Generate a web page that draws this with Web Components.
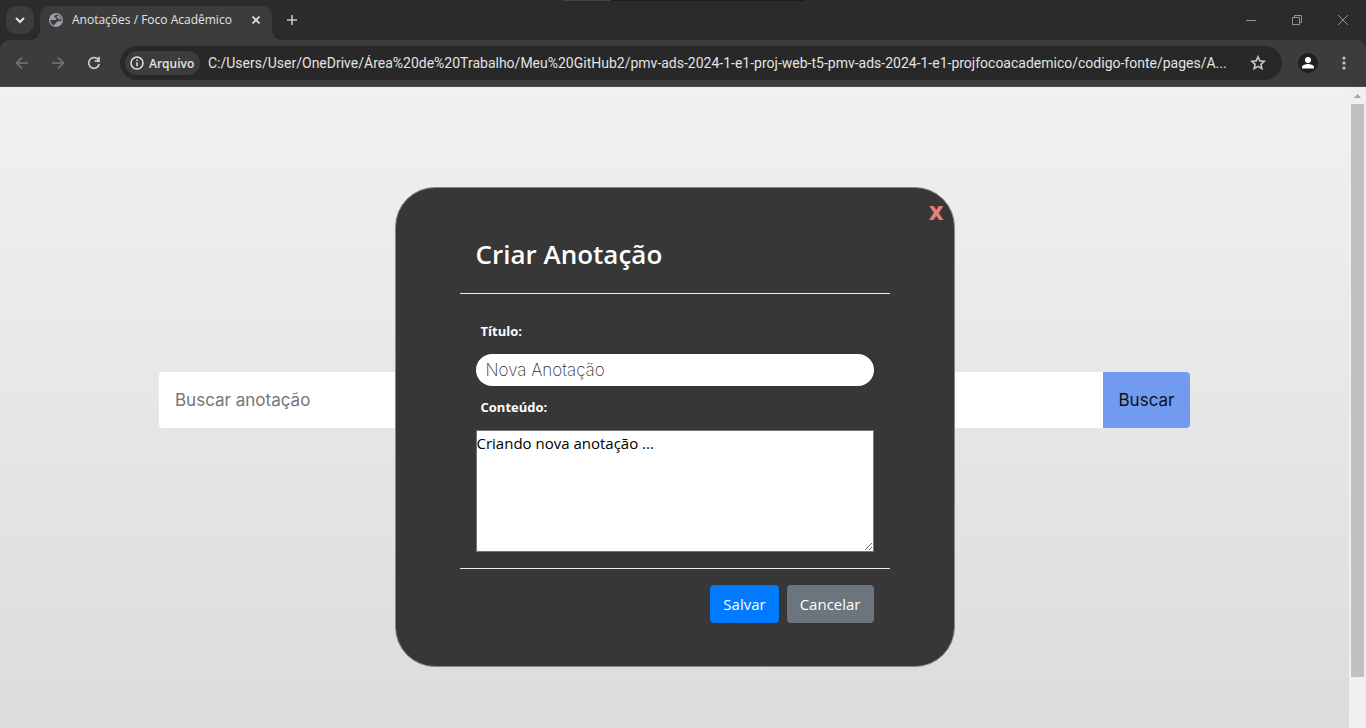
<!DOCTYPE html>
<html lang="pt-BR">
<head>
<meta charset="utf-8">
<title>Anotações / Foco Acadêmico</title>
<style>
html, body { height: 100%; margin: 0; }
body {
  --ui: "Open Sans", "Noto Sans", sans-serif;
  --geo: Inter, "Open Sans", sans-serif;
  --chrome: Roboto, "Open Sans", sans-serif;
  font-family: var(--ui);
  display: flex; flex-direction: column; overflow: hidden; background: #efefef;
}
</style>
</head>
<body>
<tab-strip><browser-tab>Anotações / Foco Acadêmico</browser-tab></tab-strip>
<tool-bar>
  <address-bar kind="Arquivo" url="C:/Users/User/OneDrive/Área%20de%20Trabalho/Meu%20GitHub2/pmv-ads-2024-1-e1-proj-web-t5-pmv-ads-2024-1-e1-projfocoacademico/codigo-fonte/pages/A..."></address-bar>
</tool-bar>
<page-view>
  <note-search></note-search>
  <note-dialog heading="Criar Anotação">
    <note-form></note-form>
    <action-button slot="actions" tone="primary">Salvar</action-button>
    <action-button slot="actions" tone="secondary">Cancelar</action-button>
  </note-dialog>
</page-view>
<script>
const BASE = `:host,*{box-sizing:border-box} button,input,textarea{font:inherit;margin:0} button{border:0;padding:0;background:none;color:inherit;display:grid;place-items:center} svg{display:block}`;
function define(name, html) {
  customElements.define(name, class extends HTMLElement {
    connectedCallback() {
      if (this.shadowRoot) return;
      const root = this.attachShadow({ mode: 'open' });
      const t = document.createElement('template');
      t.innerHTML = `<style>${BASE}</style>` + (typeof html === 'function' ? html(this) : html);
      root.append(t.content.cloneNode(true));
    }
  });
}

define('tab-strip', `
<style>
:host{display:flex;height:40px;flex:none;background:#2b2b2b;padding-left:6px;color:#e3e3e3;
  background-image:linear-gradient(#444,#444),linear-gradient(#1c1c1c,#1c1c1c);background-size:48px 1px,241px 1px;background-position:563px 0,563px 0;background-repeat:no-repeat}
.menu{width:28px;height:28px;margin:6px 6px 0 0;border-radius:10px;background:#3c3c3c}
.new{width:24px;height:24px;margin:8px 0 0 8px;color:#c7c7c7}
.win{display:flex;margin-left:auto}
.win button{width:46px;height:40px;color:#929292}
</style>
<button class="menu" aria-label="Pesquisar guias"><svg width="12" height="12" viewBox="0 0 12 12" fill="none" stroke="currentColor" stroke-width="2"><path d="M2 4l4 4 4-4"/></svg></button>
<slot></slot>
<button class="new" aria-label="Nova guia"><svg width="12" height="12" viewBox="0 0 12 12" stroke="currentColor" stroke-width="1.6"><path d="M6 1v10M1 6h10"/></svg></button>
<div class="win">
<button aria-label="Minimizar"><svg width="10" height="10" stroke="currentColor"><path d="M0 5.500h10"/></svg></button>
<button aria-label="Restaurar"><svg width="10" height="10" fill="none" stroke="currentColor"><path d="M.5 2.500h7v7h-7zM2.500 2.500v-2h7v7h-2"/></svg></button>
<button aria-label="Fechar"><svg width="10" height="10" stroke="currentColor"><path d="M0 0l10 10M10 0L0 10"/></svg></button>
</div>`);

define('browser-tab', `
<style>
:host{display:flex;align-items:center;width:232px;height:34px;margin-top:6px;padding:0 8px 6px;background:#3c3c3c;border-radius:10px 10px 0 0;position:relative;font-family:var(--ui);font-size:12px;color:#e3e3e3;white-space:nowrap}
:host::before,:host::after{content:"";position:absolute;bottom:0;width:10px;height:10px}
:host::before{left:-10px;background:radial-gradient(circle at 0 0,#2b2b2b 10px,#3c3c3c 10px)}
:host::after{right:-10px;background:radial-gradient(circle at 100% 0,#2b2b2b 10px,#3c3c3c 10px)}
svg{flex:none}
.text{margin-left:8px;line-height:18px}
button{margin-left:auto;width:16px;height:16px}
</style>
<svg width="16" height="16" viewBox="0 0 16 16"><circle cx="8" cy="8" r="7" fill="#9aa0a6"/><path d="M8.500 2.400C7.600 3 6.600 3.300 6.200 4.300c-.3 1 .6 1.400 1.500 1.400.9 0 1 .8.600 1.400-.5.900-1.700.9-2.600.8H2.300C2.300 10.600 4 12.900 6.300 13.500c.1-1.100.3-1.500 1.200-1.900 1-.4.800-1.600 1.600-2.100 1.200-.7 3-.1 4.400-.5.700-3-1.600-6.300-5-6.600z" fill="#3c3c3c"/><path d="M9.500 3.400c1.900.4 3.200 1.900 3.400 3.800-1 .5-2.400.4-2.700-.6-.3-1.200-1.700-.9-1.500-2.100z" fill="#9aa0a6"/></svg>
<span class="text"><slot></slot></span>
<button aria-label="Fechar guia"><svg width="8" height="8" stroke="currentColor" stroke-width="1.600"><path d="M.5.5l7 7M7.500.5l-7 7"/></svg></button>`);

define('tool-bar', `
<style>
:host{display:block;flex:none;background:#2b2b2b}
nav{display:flex;align-items:center;height:47px;padding:0 10px 0 10px;background:#3c3c3c;border-bottom:1px solid #494949;border-radius:10px 10px 0 0}
button{width:24px;height:24px;flex:none;color:#c7c7c7}
.off{color:#757575}
.b{margin-right:12px}.r{margin-right:14px}
slot{display:block;flex:1;min-width:0}
.user{width:20px;height:20px;border-radius:50%;background:#1f1f1f;color:#fff;margin:0 14px 0 16px}
.more{margin-right:0}
</style>
<nav>
<button class="off b" aria-label="Voltar"><svg width="14" height="14" fill="none" stroke="currentColor" stroke-width="1.600"><path d="M13 7H1.500M7 1.500L1.500 7 7 12.500"/></svg></button>
<button class="off b" aria-label="Avançar"><svg width="14" height="14" fill="none" stroke="currentColor" stroke-width="1.600"><path d="M1 7h11.500M7 1.500l5.500 5.500L7 12.500"/></svg></button>
<button class="r" aria-label="Recarregar"><svg width="14" height="14" fill="none" stroke="currentColor" stroke-width="1.800"><path d="M11.500 4.200A5.300 5.300 0 1 0 12.200 8M12 .8v4.400H7.600"/></svg></button>
<slot></slot>
<button class="user" aria-label="Perfil"><svg width="14" height="14" fill="currentColor"><circle cx="7" cy="4" r="3"/><path d="M1 12.500v-1.500c0-2 4-3 6-3s6 1 6 3v1.500z"/></svg></button>
<button class="more" aria-label="Mais"><svg width="4" height="14" fill="currentColor"><circle cx="2" cy="2" r="1.600"/><circle cx="2" cy="7" r="1.600"/><circle cx="2" cy="12" r="1.600"/></svg></button>
</nav>`);

define('address-bar', el => `
<style>
:host{display:flex;align-items:center;flex:1;min-width:0;height:34px;padding:0 12px 0 5px;border-radius:17px;background:#282828;color:#e3e3e3}
.chip{display:flex;align-items:center;gap:5px;height:24px;width:75px;flex:none;padding:0 5px;border-radius:12px;background:#3c3c3c;font-size:12px;font-weight:600}
input{flex:1;min-width:0;margin:0 8px;padding:0;border:0;background:none;color:inherit;font-family:var(--chrome);font-size:14px;outline:0}
.star{width:24px;height:24px;color:#c7c7c7}
</style>
<button class="chip"><svg width="14" height="14" fill="none" stroke="currentColor" stroke-width="1.500"><circle cx="7" cy="7" r="6"/><path d="M7 6.200v4M7 3.500v1.500"/></svg>${el.getAttribute('kind')}</button>
<input type="text" aria-label="Endereço" value="${el.getAttribute('url')}">
<button class="star" aria-label="Favoritos"><svg width="16" height="16" fill="none" stroke="currentColor" stroke-width="1.600"><path d="M8 1.800l1.800 4.100 4.500.4-3.400 3 1 4.400L8 11.400l-3.900 2.300 1-4.400-3.400-3 4.500-.4z"/></svg></button>`);

define('page-view', `
<style>
:host{display:flex;flex:1;min-height:0}
main{flex:1;min-width:0;display:grid;grid-template:1fr / 1fr;background:linear-gradient(#f1f1f1,#dcdcdc)}
::slotted(*){grid-area:1 / 1}
.bar{width:17px;flex:none;display:flex;flex-direction:column;align-items:center;background:#f0f0f0}
.bar svg{flex:none}
.thumb{width:13px;flex:573;background:#c1c1c1}
.rest{flex:51}
</style>
<main><slot></slot></main>
<div class="bar" aria-hidden="true"><svg width="17" height="17" fill="#a3a3a3"><path d="M5 11h7L8.500 7z"/></svg><div class="thumb"></div><div class="rest"></div></div>`);

define('note-search', `
<style>
:host{display:block;padding:285px 159px 0;font-family:var(--geo);font-size:17px}
form{display:flex;height:56px;border-radius:4px;overflow:hidden}
input{flex:1;min-width:0;border:0;padding:0 16px;background:#fff;outline:0}
input::placeholder{color:#757575;opacity:1}
button{width:87px;background:#719bee;color:#111}
</style>
<form><input type="search" placeholder="Buscar anotação" aria-label="Buscar anotação"><button type="button">Buscar</button></form>`);

define('note-dialog', el => `
<style>
:host{display:block;justify-self:center;align-self:start;width:100%;max-width:560px;margin-top:100px;z-index:1}
section{position:relative;padding:31px 64px 27px;border:1px solid #888;border-radius:40px;background:#373737;color:#fff}
header{padding:14px 16px 18px;border-bottom:1px solid #e9ecef}
h2{margin:0;font-size:26px;line-height:42px;font-weight:600}
.body{padding:16px;border-bottom:1px solid #e9ecef}
footer{display:flex;justify-content:flex-end;gap:8px;padding:16px}
.close{position:absolute;top:11px;right:10px;color:#e67e7e;font-size:20px;line-height:28px;font-weight:800}
</style>
<section role="dialog" aria-labelledby="h">
<button class="close" aria-label="Fechar">X</button>
<header><h2 id="h">${el.getAttribute('heading')}</h2></header>
<div class="body"><slot></slot></div>
<footer><slot name="actions"></slot></footer>
</section>`);

define('note-form', `
<style>
:host{display:block}
label{display:block;padding-left:5px;height:44px;line-height:42px;font-size:13px;font-weight:700}
input{display:block;width:100%;height:32px;border:0;border-radius:16px;padding:0 10px;background:#fff;font-family:var(--geo);font-size:17px;font-weight:200;outline:0}
input::placeholder{color:#333;opacity:1}
textarea{display:block;width:100%;height:122px;border:1px solid #767676;padding:0;background:#fff;color:#000;font-size:15px;line-height:24px;resize:both;outline:0}
</style>
<label for="t">Título:</label><input id="t" type="text" placeholder="Nova Anotação">
<label for="c">Conteúdo:</label><textarea id="c">Criando nova anotação ...</textarea>`);

define('action-button', el => `
<style>
:host{display:block}
button{height:38px;padding:0 13px;border-radius:4px;font-size:15px;color:#fff;background:${el.getAttribute('tone') === 'primary' ? '#007bff' : '#6c757d'}}
</style>
<button type="button"><slot></slot></button>`);
</script>
</body>
</html>
